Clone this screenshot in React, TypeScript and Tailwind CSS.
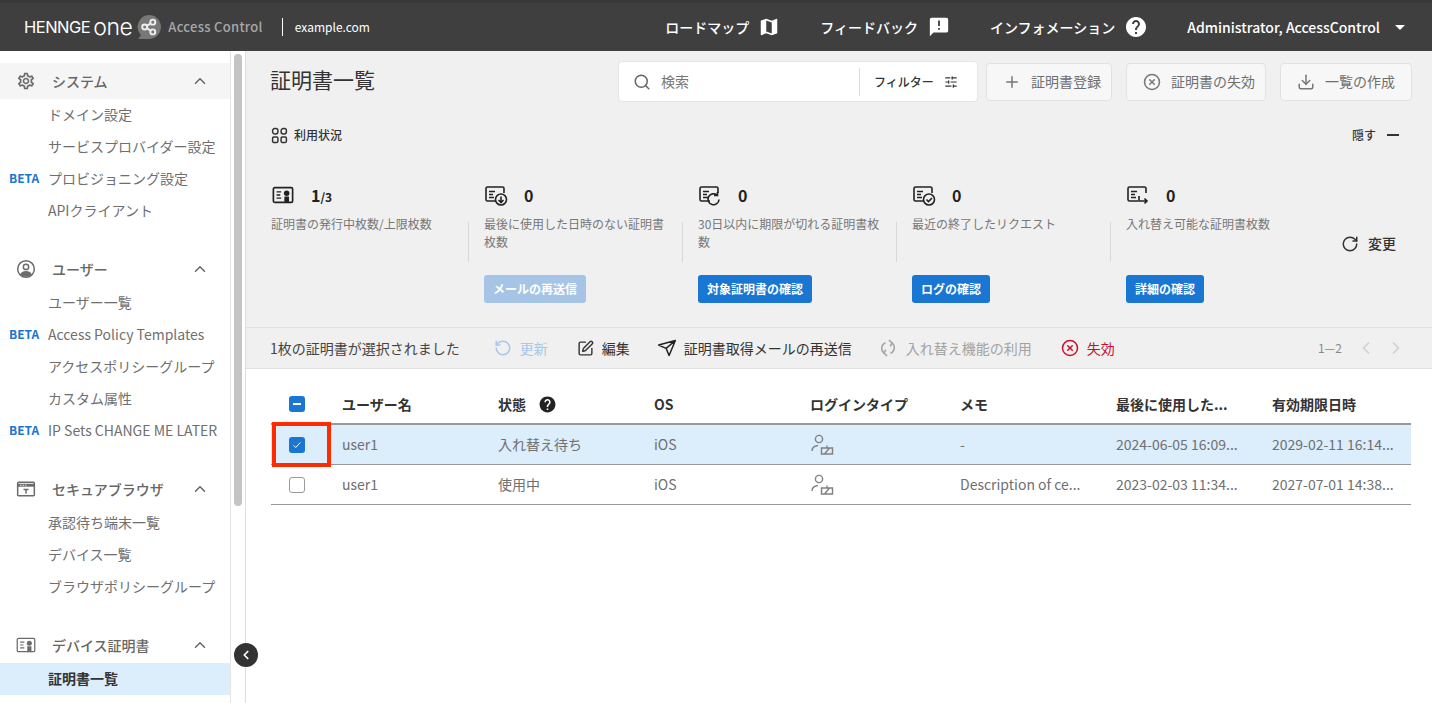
import { ChevronLeft, ChevronRight, ChevronUp, CircleX, Download, Plus, RotateCw, Search, SlidersHorizontal, SquarePen } from "lucide-react";
import { MdAnnouncement, MdArrowDropDown, MdHelp, MdMap, MdOutlineSettings } from "react-icons/md";
import type { ReactNode } from "react";

const font = "font-['Noto_Sans_CJK_JP','Noto_Sans',sans-serif]";

// small certificate base shared by the stat icons
function CertBase({ children }: { children?: ReactNode }) {
  return (
    <svg viewBox="0 0 24 24" className="w-[24px] h-[24px] text-[#222]" fill="none" stroke="currentColor" strokeWidth="1.6">
      <path d="M12 18H3.500A1.500 1.500 0 0 1 2 16.500V5.500A1.500 1.500 0 0 1 3.500 4h15A1.500 1.500 0 0 1 20 5.500V10" />
      <path d="M5 8.500h6M5 11.500h4M5 14.500h5" />
      {children}
    </svg>
  );
}

function CertSeal({ className, weight = 1.8 }: { className?: string; weight?: number }) {
  return (
    <svg viewBox="0 0 24 24" className={className} fill="none" stroke="currentColor" strokeWidth={weight}>
      <rect x="1.500" y="4" width="21" height="16" rx="1.500" />
      <path d="M5 8.500h5M5 12h4M5 15.500h5" strokeWidth="1.400" />
      <circle cx="16" cy="10" r="3" fill="currentColor" stroke="none" />
      <path d="M13.500 13.500h5V21l-2.500-1.500-2.500 1.500z" fill="currentColor" stroke="none" />
    </svg>
  );
}

function UserTag() {
  return (
    <svg viewBox="0 0 24 24" className="w-[24px] h-[24px] text-[#808080]" fill="none" stroke="currentColor" strokeWidth="1.400">
      <circle cx="9" cy="6" r="3.600" />
      <path d="M2 18c0-3 2-5 6-5.500" />
      <path d="M11.500 15h11v6h-11zM14.500 21l5-6M17 12.500V15" />
    </svg>
  );
}

function Swap() {
  return (
    <svg viewBox="0 0 24 24" className="w-[20px] h-[20px] text-[#a3a3a3]" fill="none" stroke="currentColor" strokeWidth="1.800">
      <path d="M9 5.500A7.500 7.500 0 0 0 7 18M11 21.500L7 18l2.500-4" />
      <path d="M15 18.500A7.500 7.500 0 0 0 17 6M13 2.500L17 6l-2.500 4" />
    </svg>
  );
}

function PaperPlane() {
  return (
    <svg viewBox="0 0 24 24" className="w-[20px] h-[20px] text-[#222]" fill="none" stroke="currentColor" strokeWidth="1.800" strokeLinejoin="round">
      <path d="M2 8.500L22 3l-7.500 18-3.500-8.500zM11 12.500L22 3" />
    </svg>
  );
}

function Browser() {
  return (
    <svg viewBox="0 0 24 24" className="w-[20px] h-[20px] text-[#6b6b6b]" fill="none" stroke="currentColor" strokeWidth="1.800">
      <rect x="2" y="4" width="20" height="16" rx="1" />
      <path d="M2 7.500h20" strokeWidth="3.500" />
      <path d="M5 7.500h1.500M8 7.500h1.500M11 7.500h1.500" stroke="white" strokeWidth="1.200" />
      <path d="M9 12.500h6M12 12.500v5" />
    </svg>
  );
}

function UserCircle() {
  return (
    <svg viewBox="0 0 24 24" className="w-[20px] h-[20px] text-[#6b6b6b]">
      <circle cx="12" cy="12" r="10" fill="none" stroke="currentColor" strokeWidth="1.800" />
      <circle cx="12" cy="9.500" r="3.200" fill="none" stroke="currentColor" strokeWidth="1.800" />
      <path d="M5 18.500c1.500-3 4-4 7-4s5.500 1 7 4a10 10 0 0 1-14 0z" fill="currentColor" />
    </svg>
  );
}

const nav = [
  {
    title: "システム",
    icon: <MdOutlineSettings className="w-[22px] h-[22px] text-[#6b6b6b]" />,
    active: true,
    items: [
      { label: "ドメイン設定" },
      { label: "サービスプロバイダー設定" },
      { label: "プロビジョニング設定", beta: true },
      { label: "APIクライアント" },
    ],
  },
  {
    title: "ユーザー",
    icon: <UserCircle />,
    items: [
      { label: "ユーザー一覧" },
      { label: "Access Policy Templates", beta: true },
      { label: "アクセスポリシーグループ" },
      { label: "カスタム属性" },
      { label: "IP Sets CHANGE ME LATER", beta: true },
    ],
  },
  {
    title: "セキュアブラウザ",
    icon: <Browser />,
    items: [{ label: "承認待ち端末一覧" }, { label: "デバイス一覧" }, { label: "ブラウザポリシーグループ" }],
  },
  {
    title: "デバイス証明書",
    icon: <CertSeal className="w-[20px] h-[20px] text-[#6b6b6b]" weight={1.5} />,
    items: [{ label: "証明書一覧", selected: true }],
  },
];

const stats = [
  {
    icon: <CertSeal className="w-[22px] h-[22px] text-[#222]" />,
    value: "1",
    sub: "/3",
    text: "証明書の発行中枚数/上限枚数",
  },
  {
    icon: (
      <CertBase>
        <circle cx="17" cy="16.500" r="5.500" />
        <path d="M17 13.500v6M14.500 17l2.500 2.500 2.500-2.500" />
      </CertBase>
    ),
    value: "0",
    text: "最後に使用した日時のない証明書枚数",
    button: "メールの再送信",
    disabled: true,
  },
  {
    icon: (
      <CertBase>
        <path d="M21 16.500a5.500 5.500 0 1 1-2-4.500M19.500 9v3.500H16" />
      </CertBase>
    ),
    value: "0",
    text: "30日以内に期限が切れる証明書枚数",
    button: "対象証明書の確認",
  },
  {
    icon: (
      <CertBase>
        <circle cx="17" cy="16.500" r="5.500" />
        <path d="M14.500 16.500l2 2 3.500-3.500" />
      </CertBase>
    ),
    value: "0",
    text: "最近の終了したリクエスト",
    button: "ログの確認",
  },
  {
    icon: (
      <CertBase>
        <path d="M13 13v5h8M18.500 15.500L21 18l-2.500 2.500" />
      </CertBase>
    ),
    value: "0",
    text: "入れ替え可能な証明書枚数",
    button: "詳細の確認",
  },
];

const columns = "grid grid-cols-[71px_156px_156px_156px_150px_156px_156px_139px]";

const rows = [
  { state: "入れ替え待ち", memo: "-", last: "2024-06-05 16:09...", exp: "2029-02-11 16:14...", checked: true },
  { state: "使用中", memo: "Description of ce...", last: "2023-02-03 11:34...", exp: "2027-07-01 14:38...", checked: false },
];

function Sidebar() {
  return (
    <aside className="w-[231px] shrink-0 border-r border-[#e4e4e4] pt-[12px] overflow-hidden">
      {nav.map((section) => (
        <div key={section.title} className="mb-[24px]">
          <div className={`h-[36px] flex items-center pl-[16px] pr-[21px] ${section.active ? "bg-[#f5f5f5]" : ""}`}>
            <span className="w-[20px] flex justify-center">{section.icon}</span>
            <span className="ml-[16px] flex-1 text-[14px] font-medium text-[#666]">{section.title}</span>
            <ChevronUp className="w-[18px] h-[18px] text-[#666]" />
          </div>
          {section.items.map((item) => (
            <div
              key={item.label}
              className={`h-[32px] pb-[2px] flex items-center relative pl-[48px] text-[14px] whitespace-nowrap ${
                item.selected ? "bg-[#dcedfb] font-bold text-[#333]" : "text-[#6f6f6f]"
              }`}
            >
              {item.beta && (
                <span className="absolute left-[9px] top-[6px] text-[12px] font-bold text-[#1976d2]">BETA</span>
              )}
              {item.label}
            </div>
          ))}
        </div>
      ))}
    </aside>
  );
}

function TopBar() {
  return (
    <header className="h-[51px] shrink-0 bg-[#3f3f3f] border-t-[3px] border-[#393939] flex items-center text-white pl-[24px] pr-[20px]">
      <span className="font-['Inter',sans-serif] text-[16.500px] tracking-[-0.5px]">HENNGE</span>
      <span className="ml-[3px] font-['Inter',sans-serif] text-[23px] font-light leading-none tracking-[-0.5px]">one</span>
      <svg viewBox="0 0 24 24" className="ml-[4px] w-[26px] h-[26px]">
        <path d="M12 1a11 11 0 0 1 0 22H2l2.500-3.500A11 11 0 0 1 12 1z" fill="#787878" />
        <circle cx="8" cy="12" r="2.300" fill="none" stroke="#eee" strokeWidth="1.800" />
        <circle cx="15.500" cy="7.500" r="2.300" fill="none" stroke="#eee" strokeWidth="1.800" />
        <circle cx="15.500" cy="16.500" r="2.300" fill="none" stroke="#eee" strokeWidth="1.800" />
        <path d="M10 11l3.500-2.300M10 13l3.500 2.300" stroke="#eee" strokeWidth="1.800" />
      </svg>
      <span className="ml-[6px] text-[13px] font-medium tracking-[0.3px] text-[#a8a8a8]">Access Control</span>
      <span className="ml-[19px] w-px h-[18px] bg-white" />
      <span className="ml-[12px] text-[12px]">example.com</span>
      <div className="ml-auto flex items-center text-[14px] font-medium">
        <span>ロードマップ</span>
        <MdMap className="ml-[9px] w-[22px] h-[22px]" />
        <span className="ml-[40px]">フィードバック</span>
        <MdAnnouncement className="ml-[10px] w-[22px] h-[22px]" />
        <span className="ml-[40px]">インフォメーション</span>
        <MdHelp className="ml-[9px] w-[24px] h-[24px]" />
        <span className="ml-[39px]">Administrator, AccessControl</span>
        <MdArrowDropDown className="ml-[8px] w-[24px] h-[24px]" />
      </div>
    </header>
  );
}

function ToolButton({ icon, label, width }: { icon: ReactNode; label: string; width: string }) {
  return (
    <div className={`h-[38px] pl-[16px] flex items-center gap-[10px] bg-[#f7f7f7] border border-[#e2e2e2] rounded-[4px] text-[14px] text-[#6f6f6f] ${width}`}>
      {icon}
      {label}
    </div>
  );
}

function Stats() {
  return (
    <div className="mt-[39px] flex h-[144px] relative">
      {stats.map((s, i) => (
        <div key={i} className={`relative ${i === 0 ? "w-[197px]" : "w-[214px] pl-[16px]"}`}>
          {i > 0 && <span className="absolute left-0 top-[39px] h-[40px] w-px bg-[#d8d8d8]" />}
          <div className="flex items-center h-[24px] gap-[16px]">
            <span className="w-[24px] flex justify-center">{s.icon}</span>
            <span className="text-[16px] font-bold text-[#222]">
              {s.value}
              {s.sub && <span className="text-[12px]">{s.sub}</span>}
            </span>
          </div>
          <p className="mt-[8px] w-[186px] text-[12px] leading-[18px] text-[#777]">{s.text}</p>
          {s.button && (
            <div
              className={`absolute top-[92px] h-[28px] px-[9px] flex items-center rounded-[3px] text-[12px] font-bold text-white ${
                s.disabled ? "bg-[#a5c4e6]" : "bg-[#1976d2]"
              }`}
            >
              {s.button}
            </div>
          )}
        </div>
      ))}
      <div className="absolute left-[1070px] top-[50px] flex items-center gap-[9px] text-[14px] font-medium text-[#333]">
        <RotateCw className="w-[18px] h-[18px]" />
        変更
      </div>
    </div>
  );
}

function SelectionBar() {
  return (
    <div className="h-[42px] border-t border-b border-[#e0e0e0] flex items-center pl-[24px] pr-[26px] text-[14px] text-[#444]">
      <span>1枚の証明書が選択されました</span>
      <span className="ml-[34px] flex items-center gap-[8px] text-[#a9c7e8]">
        <RotateCw className="w-[18px] h-[18px] -scale-x-100" />
        更新
      </span>
      <span className="ml-[29px] flex items-center gap-[8px] text-[#333]">
        <SquarePen className="w-[17px] h-[17px]" />
        編集
      </span>
      <span className="ml-[27px] flex items-center gap-[7px] text-[#333]">
        <PaperPlane />
        証明書取得メールの再送信
      </span>
      <span className="ml-[26px] flex items-center gap-[8px] text-[#a3a3a3]">
        <Swap />
        入れ替え機能の利用
      </span>
      <span className="ml-[29px] flex items-center gap-[8px] text-[#c8102e]">
        <CircleX className="w-[18px] h-[18px]" />
        失効
      </span>
      <span className="ml-auto text-[12px] text-[#888]">1—2</span>
      <ChevronLeft className="ml-[14px] w-[20px] h-[20px] text-[#d0d0d0]" />
      <ChevronRight className="ml-[10px] w-[20px] h-[20px] text-[#d0d0d0]" />
    </div>
  );
}

function Table() {
  return (
    <div className="ml-[25px] mr-[21px] mt-[16px] relative">
      <div className={`${columns} h-[40px] items-center border-b-2 border-[#999] text-[14px] font-bold text-[#333]`}>
        <div className="pl-[18px]">
          <span className="w-[16px] h-[16px] rounded-[3px] bg-[#1976d2] flex items-center justify-center">
            <span className="w-[8px] h-[2px] bg-white" />
          </span>
        </div>
        <div>ユーザー名</div>
        <div className="flex items-center gap-[12px]">
          状態
          <MdHelp className="w-[19px] h-[19px] text-[#222]" />
        </div>
        <div>OS</div>
        <div>ログインタイプ</div>
        <div>メモ</div>
        <div>最後に使用した...</div>
        <div>有効期限日時</div>
      </div>
      {rows.map((r) => (
        <div
          key={r.last}
          className={`${columns} h-[40px] items-center border-b border-[#999] text-[14px] text-[#707070] ${
            r.checked ? "bg-[#dcedfb]" : ""
          }`}
        >
          <div className="pl-[18px]">
            {r.checked ? (
              <span className="w-[16px] h-[16px] rounded-[3px] bg-[#1976d2] flex items-center justify-center">
                <svg viewBox="0 0 12 12" className="w-[10px] h-[10px]" fill="none" stroke="white" strokeWidth="1.200">
                  <path d="M2 6.500l2.500 2.500L10 3" />
                </svg>
              </span>
            ) : (
              <span className="block w-[16px] h-[16px] rounded-[3px] border border-[#9a9a9a] bg-white" />
            )}
          </div>
          <div>user1</div>
          <div>{r.state}</div>
          <div>iOS</div>
          <div>
            <UserTag />
          </div>
          <div>{r.memo}</div>
          <div>{r.last}</div>
          <div>{r.exp}</div>
        </div>
      ))}
      {/* red annotation around the checked row's box */}
      <div className="absolute left-[1px] top-[37px] w-[59px] h-[45px] border-[4px] border-[#ff2a00]" />
    </div>
  );
}

export default function App() {
  return (
    <div className={`w-[1432px] h-[703px] overflow-hidden flex flex-col bg-white ${font}`}>
      <TopBar />
      <div className="flex-1 flex min-h-0 relative">
        <Sidebar />
        <div className="w-[15px] shrink-0 border-r border-[#dedede] pl-[3px] pr-[3px] pt-[3px]">
          <div className="h-[452px] rounded-full bg-[#c4c4c4]" />
        </div>
        <main className="flex-1 min-w-0">
          <div className="bg-[#f0f0f0] pt-[10px]">
            <div className="flex items-center pl-[24px] pr-[20px]">
              <h1 className="pb-[3px] text-[21px] font-normal text-[#333]">証明書一覧</h1>
              <div className="ml-auto flex items-center">
                <div className="w-[360px] h-[41px] bg-white border border-[#e6e6e6] rounded-[4px] flex items-center pl-[14px]">
                  <Search className="w-[18px] h-[18px] text-[#666]" />
                  <span className="ml-[10px] flex-1 text-[14px] text-[#777]">検索</span>
                  <div className="h-[28px] w-[118px] border-l border-[#ddd] flex items-center pl-[14px] gap-[10px] text-[12px] font-medium text-[#333]">
                    フィルター
                    <SlidersHorizontal className="w-[14px] h-[14px]" />
                  </div>
                </div>
                <div className="ml-[8px]">
                  <ToolButton width="w-[126px]" icon={<Plus className="w-[18px] h-[18px] text-[#777]" />} label="証明書登録" />
                </div>
                <div className="ml-[14px]">
                  <ToolButton width="w-[140px]" icon={<CircleX className="w-[18px] h-[18px] text-[#777]" />} label="証明書の失効" />
                </div>
                <div className="ml-[14px]">
                  <ToolButton width="w-[132px]" icon={<Download className="w-[18px] h-[18px] text-[#777]" />} label="一覧の作成" />
                </div>
              </div>
            </div>
            <div className="mt-[24px] flex items-center pl-[25px] pr-[33px] text-[12px] font-medium text-[#333]">
              <svg viewBox="0 0 16 16" className="w-[17px] h-[17px]" fill="none" stroke="currentColor" strokeWidth="1.400">
                <rect x="1.500" y="1.500" width="5" height="5" rx="2" />
                <rect x="9.500" y="1.500" width="5" height="5" rx="2" />
                <rect x="1.500" y="9.500" width="5" height="5" rx="1" />
                <rect x="9.500" y="9.500" width="5" height="5" rx="1" />
              </svg>
              <span className="ml-[6px]">利用状況</span>
              <span className="ml-auto">隠す</span>
              <span className="ml-[11px] w-[12px] h-[2px] bg-[#333]" />
            </div>
            <div className="pl-[25px]">
              <Stats />
            </div>
            <SelectionBar />
          </div>
          <Table />
        </main>
        <div className="absolute left-[234px] top-[592px] w-[24px] h-[24px] rounded-full bg-[#333] flex items-center justify-center">
          <ChevronLeft className="w-[14px] h-[14px] text-white" strokeWidth={3} />
        </div>
      </div>
    </div>
  );
}
